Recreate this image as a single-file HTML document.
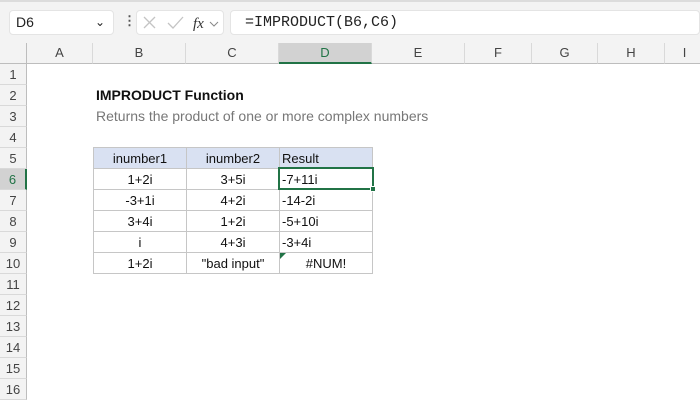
<!DOCTYPE html>
<html><head><style>
*{margin:0;padding:0;box-sizing:border-box}
body{width:700px;height:400px;overflow:hidden;background:#fff;font-family:"Liberation Sans",Calibri,sans-serif;position:relative}
.a{position:absolute}
.top{left:0;top:0;width:700px;height:43px;background:#f3f3f3;border-top:2px solid #dcdcdc}
.box{background:#fff;border-radius:4px;border:1px solid #e4e4e4}
.ch{top:43px;height:21px;background:#f3f3f3;border-right:1px solid #d9d9d9;border-bottom:1px solid #bdbdbd;font-size:13px;color:#444;text-align:center;line-height:20px}
.rh{left:0;width:27px;height:21px;background:#f3f3f3;border-bottom:1px solid #d9d9d9;border-right:1px solid #bdbdbd;font-size:13px;color:#444;text-align:center;line-height:21px}
td{padding:0;border:1px solid #c6c6c6;height:21px}
</style></head><body>
<div class="a top"></div>
<div class="a box" style="left:9px;top:10px;width:105px;height:25px;font-size:14px;line-height:23px;padding-left:6px;color:#222">D6<span style="position:absolute;right:8px;top:0;font-size:12px">&#8964;</span></div>
<div class="a" style="left:123px;top:13px;color:#555;font-size:13px;font-weight:bold">&#8942;</div>
<div class="a box" style="left:136px;top:10px;width:88px;height:25px"></div>
<svg class="a" style="left:140px;top:14px" width="84" height="18"><path d="M4 3 L15 14 M15 3 L4 14" stroke="#c4c4c4" stroke-width="1.3"/><path d="M28 9 L33 14 L43 3" stroke="#c4c4c4" stroke-width="1.3" fill="none"/><text x="53" y="14" font-family="Liberation Serif" font-style="italic" font-size="15" fill="#333">fx</text><path d="M70 8 L74 12 L78 8" stroke="#888" fill="none"/></svg>
<div class="a box" style="left:230px;top:10px;width:470px;height:25px;font-family:'Liberation Mono',monospace;font-size:15px;line-height:23px;padding-left:14px;color:#222">=IMPRODUCT(B6,C6)</div>
<div class="a" style="left:0;top:43px;width:27px;height:21px;background:#f3f3f3;border-right:1px solid #bdbdbd;border-bottom:1px solid #bdbdbd"></div>
<div class="a ch" style="left:27px;width:66px">A</div>
<div class="a ch" style="left:93px;width:93px">B</div>
<div class="a ch" style="left:186px;width:93px">C</div>
<div class="a ch" style="left:279px;width:93px;background:#d2d2d2;border-bottom:2px solid #217346;color:#217346">D</div>
<div class="a ch" style="left:372px;width:93px">E</div>
<div class="a ch" style="left:465px;width:67px">F</div>
<div class="a ch" style="left:532px;width:66px">G</div>
<div class="a ch" style="left:598px;width:67px">H</div>
<div class="a ch" style="left:665px;width:40px">I</div>
<div class="a rh" style="top:64px">1</div>
<div class="a rh" style="top:85px">2</div>
<div class="a rh" style="top:106px">3</div>
<div class="a rh" style="top:127px">4</div>
<div class="a rh" style="top:148px">5</div>
<div class="a rh" style="top:169px;background:#d2d2d2;color:#217346;border-right:2px solid #217346">6</div>
<div class="a rh" style="top:190px">7</div>
<div class="a rh" style="top:211px">8</div>
<div class="a rh" style="top:232px">9</div>
<div class="a rh" style="top:253px">10</div>
<div class="a rh" style="top:274px">11</div>
<div class="a rh" style="top:295px">12</div>
<div class="a rh" style="top:316px">13</div>
<div class="a rh" style="top:337px">14</div>
<div class="a rh" style="top:358px">15</div>
<div class="a rh" style="top:379px">16</div>
<div class="a" style="left:96px;top:87px;font-size:14px;font-weight:bold;color:#111">IMPRODUCT Function</div>
<div class="a" style="left:96px;top:108px;font-size:14px;color:#777">Returns the product of one or more complex numbers</div>
<div class="a" style="left:93px;top:147px">
<table style="border-collapse:collapse;font-size:13px;color:#111;table-layout:fixed;width:279px">
<col style="width:93px"><col style="width:93px"><col style="width:93px">
<tr style="background:#d9e1f2"><td style="text-align:center">inumber1</td><td style="text-align:center">inumber2</td><td style="padding-left:2px">Result</td></tr>
<tr><td style="text-align:center">1+2i</td><td style="text-align:center">3+5i</td><td style="padding-left:2px">-7+11i</td></tr>
<tr><td style="text-align:center">-3+1i</td><td style="text-align:center">4+2i</td><td style="padding-left:2px">-14-2i</td></tr>
<tr><td style="text-align:center">3+4i</td><td style="text-align:center">1+2i</td><td style="padding-left:2px">-5+10i</td></tr>
<tr><td style="text-align:center">i</td><td style="text-align:center">4+3i</td><td style="padding-left:2px">-3+4i</td></tr>
<tr><td style="text-align:center">1+2i</td><td style="text-align:center">"bad input"</td><td style="text-align:center">#NUM!</td></tr>
</table></div>
<div class="a" style="left:278px;top:167px;width:96px;height:23px;border:2px solid #217346"></div>
<div class="a" style="left:370px;top:186px;width:6px;height:6px;background:#217346;border:1px solid #fff"></div>
<svg class="a" style="left:280px;top:253px" width="6" height="6"><path d="M0 0 H6 L0 6Z" fill="#217346"/></svg>
</body></html>
